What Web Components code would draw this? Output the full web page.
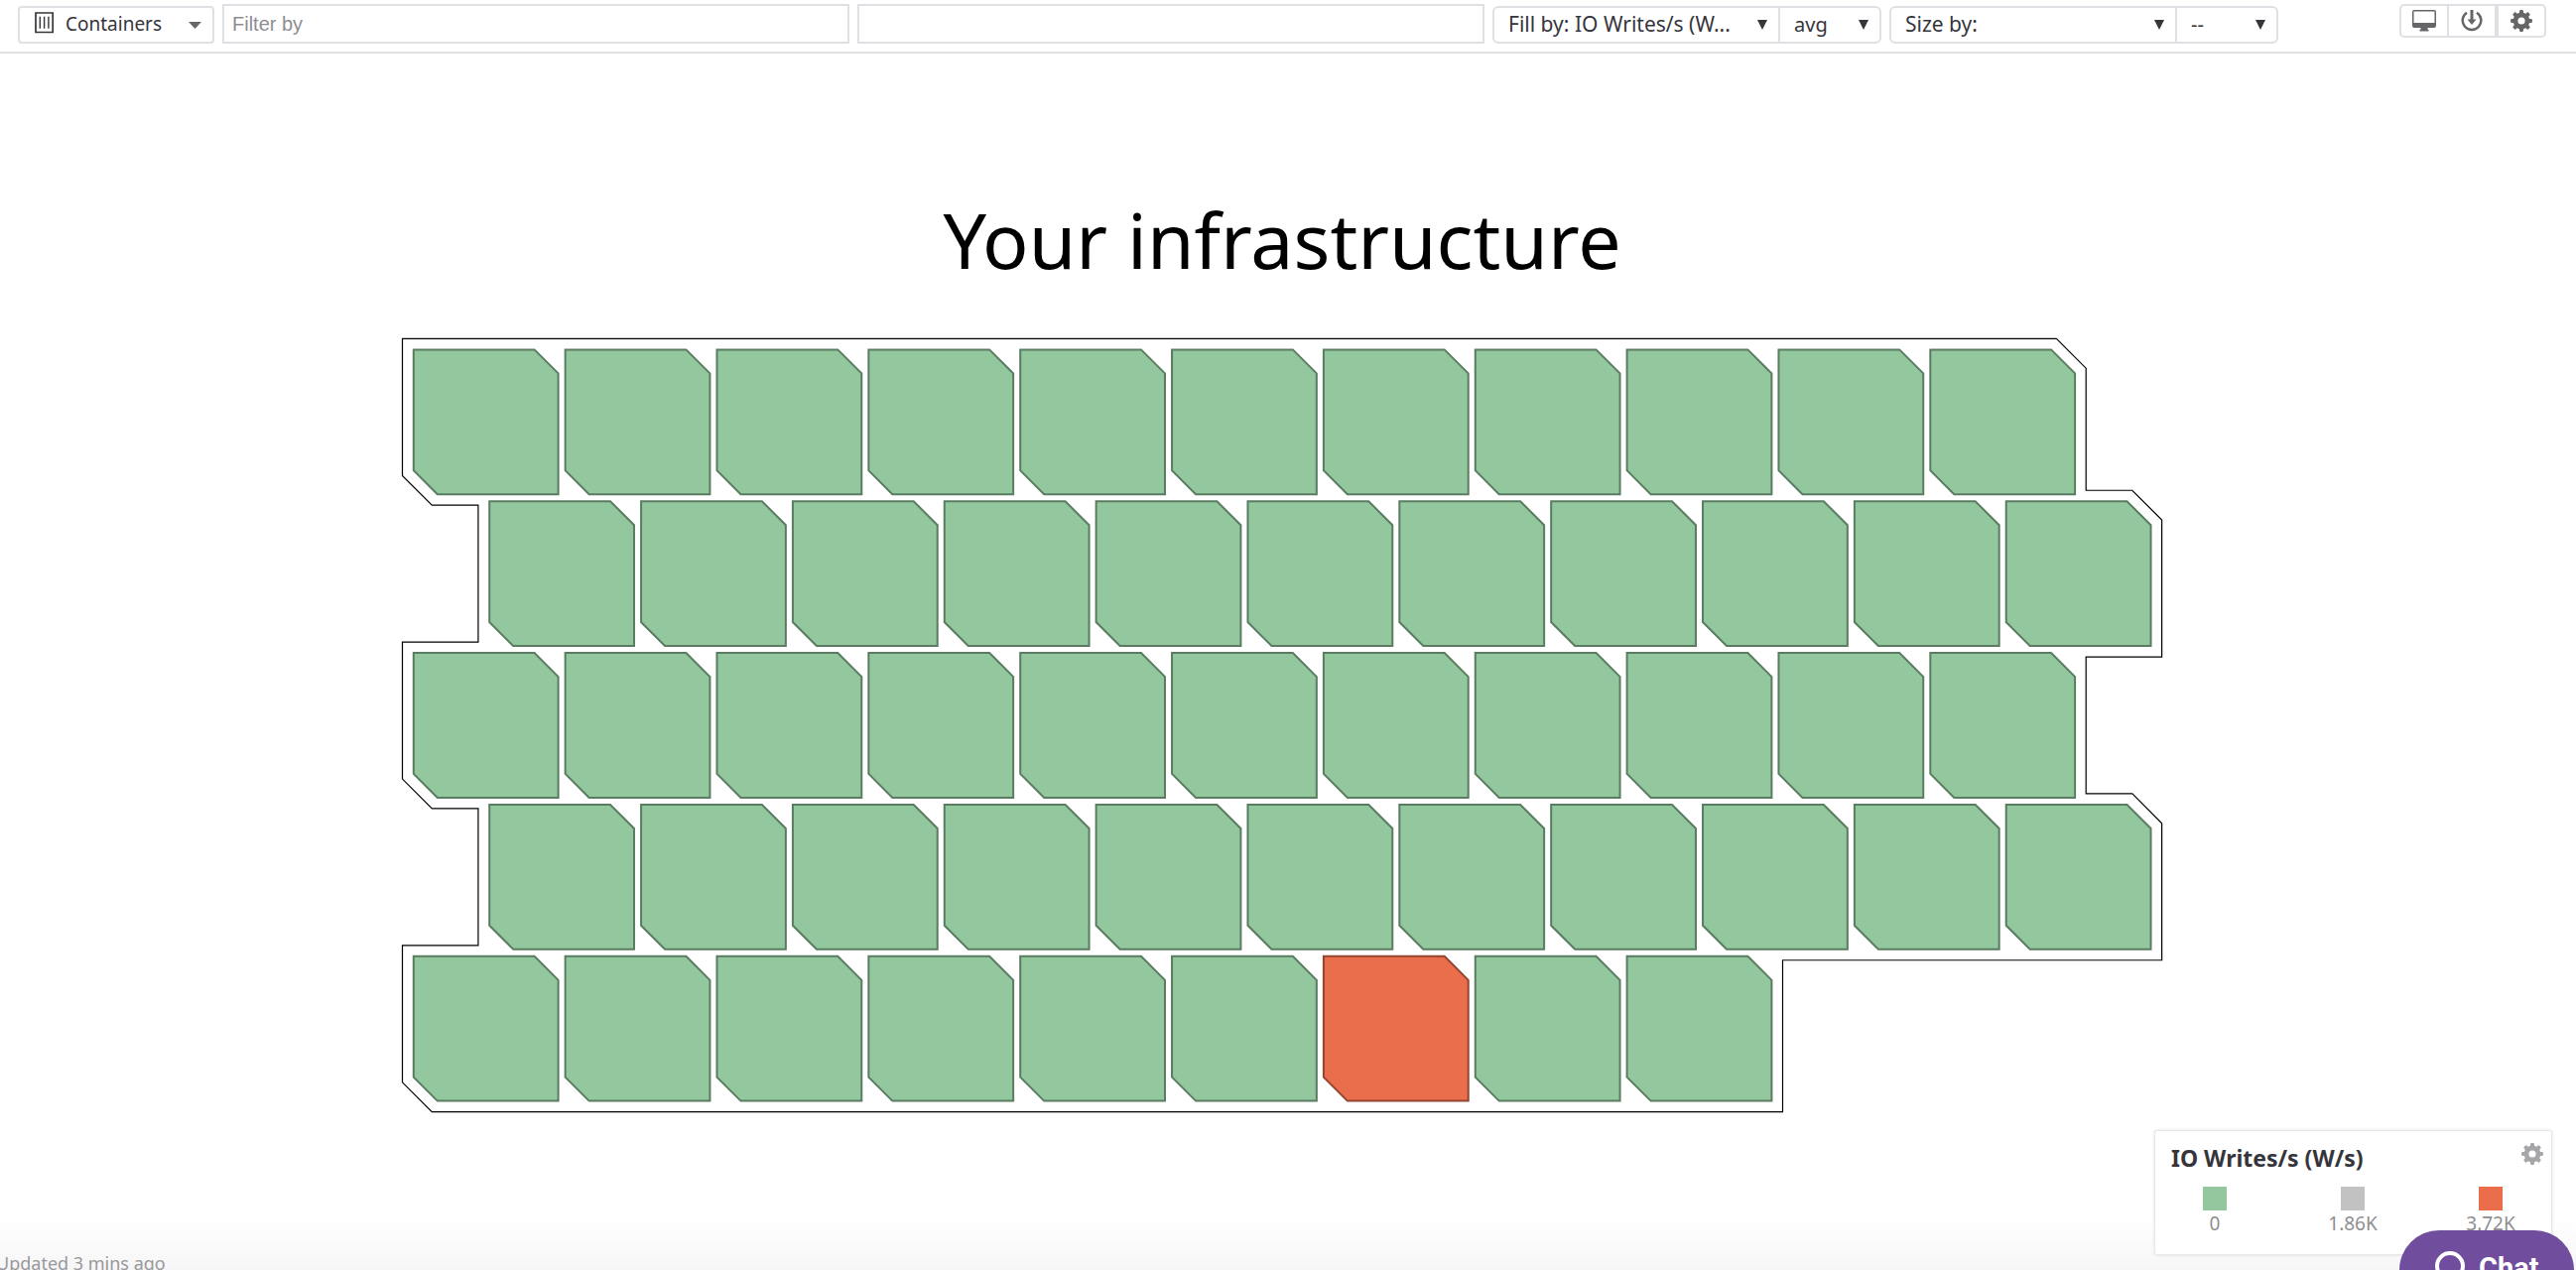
<!DOCTYPE html>
<html lang="en">
<head>
<meta charset="utf-8">
<title>Your infrastructure</title>
<style>
html, body { margin: 0; height: 100%; }
body { font-family: "Noto Sans", sans-serif; font-size: 20px; color: #35353b; background: #fff; overflow: hidden; }
</style>
</head>
<body>
<infra-app></infra-app>
<script>
const define = (name, html, setup) => {
  const tpl = document.createElement('template');
  tpl.innerHTML = html;
  customElements.define(name, class extends HTMLElement {
    constructor() {
      super();
      this.attachShadow({ mode: 'open' }).append(tpl.content.cloneNode(true));
    }
    connectedCallback() { if (setup) setup(this, this.shadowRoot); }
  });
};

// Eight-toothed gear, centred on 0,0
const gearPath = (() => {
  const p = [];
  for (let i = 0; i < 8; i++) {
    for (const [d, r] of [[-14, 8.4], [-11, 10.2], [-7, 11], [7, 11], [11, 10.2], [14, 8.4]]) {
      const a = (i * 45 + d) * Math.PI / 180;
      p.push((r * Math.sin(a)).toFixed(2) + ' ' + (-r * Math.cos(a)).toFixed(2));
    }
  }
  return 'M' + p.join('L') + 'ZM3.6 0A3.6 3.6 0 1 0 -3.6 0A3.6 3.6 0 1 0 3.6 0Z';
})();

define('gear-icon', `
<style>:host { display: block; width: 22px; height: 22px } svg { display: block }</style>
<svg width="22" height="22" viewBox="-11 -11 22 22" fill="currentColor" fill-rule="evenodd"><path d="${gearPath}"/></svg>`);

define('drop-down', `
<style>
:host { display: block; position: relative; box-sizing: border-box; height: 38px; font-size: 21px }
:host([wide]) { font-size: 19px }
select { appearance: none; display: block; box-sizing: border-box; width: 100%; height: 100%; margin: 0; border: 0; background: none;
  padding: 0 32px 2px var(--pad, 14px); font: inherit; color: inherit; }
svg { position: absolute; right: 11px; top: 0; bottom: 0; margin: auto; fill: var(--caret, #35353b); pointer-events: none }
slot { position: absolute }
::slotted(svg) { position: absolute; left: 15px; top: 4px; pointer-events: none }
</style>
<select><option></option></select>
<svg width="10" height="10" viewBox="0 0 10 10"><path d="M0 0H10L5 10Z"/></svg>
<slot></slot>`, (el, root) => {
  const s = root.querySelector('select');
  s.options[0].textContent = el.getAttribute('value');
  s.setAttribute('aria-label', el.getAttribute('label'));
  if (el.hasAttribute('wide')) {
    const v = root.querySelector('svg');
    v.setAttribute('width', 13); v.setAttribute('height', 7);
    v.setAttribute('preserveAspectRatio', 'none');
  }
});

define('filter-box', `
<style>
:host { display: block; flex: 1 }
input { display: block; box-sizing: border-box; width: 100%; height: 40px; margin: 0; padding: 0 8px; border: 2px solid #dfdfe4;
  font: 20px "Liberation Sans", sans-serif; color: #35353b; background: #fff; border-radius: 0 }
input::placeholder { color: #8e8e92; opacity: 1 }
</style>
<input type="text">`, (el, root) => {
  const i = root.querySelector('input');
  i.placeholder = el.getAttribute('placeholder') || '';
  i.setAttribute('aria-label', el.getAttribute('label'));
});

define('tool-bar', `
<style>
:host { display: flex; align-items: flex-end; gap: 8px; box-sizing: border-box; height: 54px; padding: 0 30px 8px 18px; border-bottom: 2px solid #dfdfe4 }
.filters { flex: 1; display: flex; gap: 8px }
.group { display: flex; box-sizing: border-box; height: 38px; border: 2px solid #dfdfe4; border-radius: 6px }
.group drop-down { height: 34px }
.group drop-down + drop-down { border-left: 2px solid #dfdfe4 }
.kind { width: 198px; border-radius: 4px; --pad: 46px; --caret: #666 }
.kind drop-down { flex: 1 }
.main { width: 286px } .agg { width: 102px; font-size: 20px }
.buttons { align-self: flex-start; display: flex; margin: 4px 0 0 114px; border: 2px solid #dfdfe4; border-radius: 5px; color: #666668 }
button { display: flex; align-items: center; justify-content: center; width: 46px; height: 30px; margin: 0; padding: 0; border: 0; background: none; color: inherit }
button + button { width: 48px; border-left: 2px solid #dfdfe4 }
button:last-child { border-left-width: 4px; width: 50px }
</style>
<div class="group kind"><drop-down wide label="Resource type" value="Containers">
<svg width="20" height="22" viewBox="0 0 20 22" fill="none" stroke="#35353b"><path stroke-width="1.700" d="M1 1H18.200V20.500H1Z"/><path stroke-width="1.400" d="M5.300 4.800V16.800M9.600 4.800V16.800M13.900 4.800V16.800"/></svg>
</drop-down></div>
<div class="filters"><filter-box label="Filter by" placeholder="Filter by"></filter-box><filter-box label="Group by"></filter-box></div>
<div class="group"><drop-down class="main" label="Fill by" value="Fill by: IO Writes/s (W..."></drop-down><drop-down class="agg" label="Fill aggregation" value="avg"></drop-down></div>
<div class="group"><drop-down class="main" label="Size by" value="Size by:"></drop-down><drop-down class="agg" label="Size aggregation" value="--"></drop-down></div>
<div class="buttons">
<button aria-label="Full screen"><svg width="24" height="22" viewBox="0 0 24 22" fill="currentColor"><path fill-rule="evenodd" d="M2 0H22Q24 0 24 2V16Q24 18 22 18H15.500V19.500L16.500 20V21.500H7.500V20L8.500 19.500V18H2Q0 18 0 16V2Q0 0 2 0ZM1.500 1.500V13H22.500V1.500Z"/></svg></button>
<button aria-label="Download"><svg width="22" height="22" viewBox="0 0 22 22" fill="none" stroke="currentColor" stroke-width="2.500"><path d="M6 2.800A9.300 9.300 0 1 0 16 2.800"/><path stroke-width="3" d="M11 0V11"/><path fill="currentColor" stroke="none" d="M6.500 9.500H15.500L11 15Z"/></svg></button>
<button aria-label="Settings"><gear-icon></gear-icon></button>
</div>`);

define('host-map', `
<style>
:host { display: block }
svg { display: block; width: 100%; height: auto }
.tile { fill: #93c79e; stroke: #5a7c61; stroke-width: 2 }
.tile.hot { fill: #eb6e4c; stroke: #934530 }
.outline { fill: none; stroke: #000; stroke-width: 1.2 }
</style>
<svg viewBox="0 0 1776 782" role="img" aria-label="Container map"><path class="outline"/></svg>`, (el, root) => {
  const svg = root.querySelector('svg'), NS = 'http://www.w3.org/2000/svg';
  const pitch = 152.85, size = 145.8, cut = 24, x0 = 12.8, y0 = 12.4;
  const rows = [11, 11, 11, 11, 9];
  rows.forEach((n, r) => {
    for (let c = 0; c < n; c++) {
      const x = x0 + c * pitch + (r % 2) * pitch / 2, y = y0 + r * pitch;
      const t = document.createElementNS(NS, 'path');
      t.setAttribute('class', r === 4 && c === 6 ? 'tile hot' : 'tile');
      t.setAttribute('d', `M${x} ${y}h${size - cut}l${cut} ${cut}v${size - cut}h${cut - size}l${-cut} ${-cut}Z`);
      svg.append(t);
    }
  });
  const L = 1.5, T = 1.4, h = pitch / 2, k = 29.8;
  const R = 1698.2, B = 169.2;
  root.querySelector('.outline').setAttribute('d',
    `M${L} ${T}H${R - k}L${R} ${T + k}V${T + pitch}H${R + h - k}L${R + h} ${T + pitch + k}V${B + pitch}H${R}` +
    `V${T + 3 * pitch}H${R + h - k}L${R + h} ${T + 3 * pitch + k}V${B + 3 * pitch}H1392.500V${B + 4 * pitch}H${L + k}` +
    `L${L} ${B + 4 * pitch - k}V${T + 4 * pitch}H${L + h}V${B + 2 * pitch}H${L + k}L${L} ${B + 2 * pitch - k}` +
    `V${T + 2 * pitch}H${L + h}V${B}H${L + k}L${L} ${B - k}Z`);
});

define('legend-item', `
<style>
:host { display: flex; flex-direction: column; align-items: center; width: 50px; color: #8e8e92; font-size: 19px; line-height: 26px }
i { display: block; width: 24px; height: 24px; background: var(--c) }
</style><i></i><slot></slot>`);

define('map-legend', `
<style>
:host { display: block; box-sizing: border-box; width: 401px; height: 126px; padding: 12px 16px 0; background: #fff; border: 1px solid #e8e8e8; border-radius: 3px; box-shadow: 0 0 3px #ddd }
h2 { margin: 0; font-size: 23px; line-height: 30px; font-weight: 700 }
button { position: absolute; right: 8px; top: 12px; padding: 0; border: 0; background: none; color: #a6a6a8 }
.scale { display: flex; justify-content: space-between; padding: 14px 20px 0 19px }
</style>
<h2>IO Writes/s (W/s)</h2>
<button aria-label="Legend settings"><gear-icon></gear-icon></button>
<div class="scale">
<legend-item style="--c:#93c79e">0</legend-item>
<legend-item style="--c:#c2c2c2">1.86K</legend-item>
<legend-item style="--c:#eb6e4c">3.72K</legend-item>
</div>`);

define('chat-button', `
<style>
:host { display: block }
button { display: flex; align-items: center; gap: 14px; height: 80px; width: 176px; margin: 0; padding: 0 0 4px 36px; border: 0; border-radius: 40px; background: #704d9d; color: #fff; font: 700 29px Roboto, sans-serif }
</style>
<button><svg width="30" height="34" viewBox="0 0 30 34" fill="none" stroke="#fff" stroke-width="4"><path d="M15 2A13 13 0 1 1 15 28A13 13 0 1 1 15 2M22 24L27 32"/></svg><span>Chat</span></button>`);

define('infra-app', `
<style>
:host { display: flex; flex-direction: column; position: relative; height: 100vh; overflow: hidden; background: linear-gradient(transparent calc(100% - 54px), #f6f6f6) }
main { flex: 1; padding: 134px 416px 0 404px }
h1 { margin: 0 0 44px; text-align: center; font-size: 77px; line-height: 108px; font-weight: 400; color: #000 }
footer { position: absolute; left: -4px; bottom: -7px; line-height: 28px; font-size: 18px; color: #98989c }
map-legend { position: absolute; right: 24px; bottom: 15px }
chat-button { position: absolute; right: 2px; bottom: -40px }
</style>
<tool-bar></tool-bar>
<main><h1>Your infrastructure</h1><host-map></host-map></main>
<footer>Updated 3 mins ago</footer>
<map-legend></map-legend>
<chat-button></chat-button>`);
</script>
</body>
</html>
